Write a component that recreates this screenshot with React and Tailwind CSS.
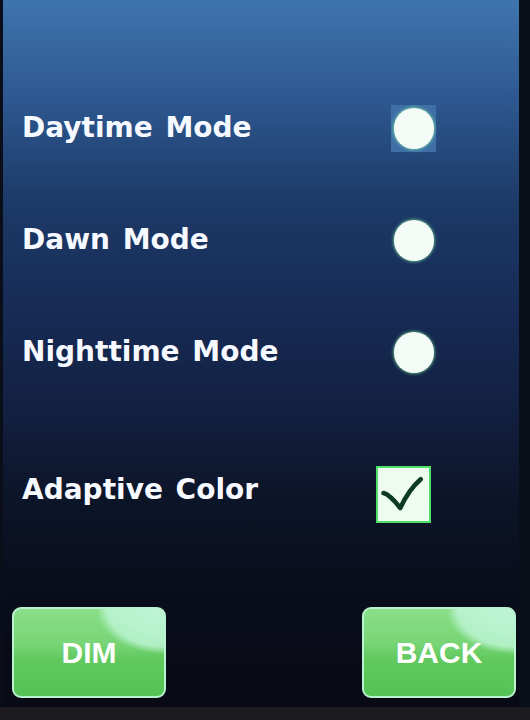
import React from "react"

const rows = [
	{ label: "Daytime Mode", selected: true },
	{ label: "Dawn Mode", selected: false },
	{ label: "Nighttime Mode", selected: false },
]

// Radio dot, the selected one sits on a blue square
function Radio({ selected }) {
	return (
		<div
			className={
				"w-[45px] h-[47px] flex items-center justify-center " +
				(selected ? "bg-[#3f6fa6]" : "")
			}
		>
			<div className="w-[40px] h-[41px] rounded-full bg-[#f4fbf6] shadow-[0_0_3px_1px_rgba(140,255,170,0.55)]" />
		</div>
	)
}

function Checkbox() {
	return (
		<div className="w-[55px] h-[57px] border-2 border-[#4fe06a] bg-[#eefcf0] flex items-center justify-center">
			<svg width="55" height="57" viewBox="0 0 55 57">
				<path
					d="M6 27 C10 28 16 33 24 43 C30 30 38 19 46 12"
					fill="none"
					stroke="#0c3a22"
					strokeWidth="5"
					strokeLinecap="round"
					strokeLinejoin="round"
				/>
			</svg>
		</div>
	)
}

function GreenButton({ children }) {
	return (
		<button className="w-[154px] h-[91px] rounded-[9px] border-2 border-[#b8f2cf] bg-[radial-gradient(ellipse_75px_50px_at_100%_0%,rgba(200,250,228,0.85)_0%,rgba(200,250,228,0.7)_75%,rgba(200,250,228,0)_90%),linear-gradient(to_bottom,#8ade88,#78d576_40%,#60c95e_58%,#55c255)] text-white font-bold text-[30px] font-['Liberation_Sans',Arial,sans-serif] flex items-center justify-center">
			{children}
		</button>
	)
}

export default function App() {
	return (
		<div className="w-[530px] h-[720px] bg-[#0a0e18] flex flex-col overflow-hidden">
			<div className="h-[707px] ml-[3px] mr-[11px] flex flex-col bg-[linear-gradient(to_bottom,#3f74ad_0px,#2d588f_100px,#1d3a68_200px,#172c57_300px,#132143_400px,#0c1428_500px,#090d1a_600px,#080b15_707px)]">
				<div className="h-[72px]" />
				{rows.map((r) => (
					<div key={r.label} className="h-[112px] flex items-center justify-between pl-[19px] pr-[83px]">
						<span className="text-[#f6f9ff] text-[28px] font-bold [word-spacing:3px] font-['DejaVu_Sans',sans-serif]">
							{r.label}
						</span>
						<Radio selected={r.selected} />
					</div>
				))}
				<div className="h-[30px]" />
				<div className="h-[112px] flex items-center justify-between pl-[19px] pr-[88px]">
					<span className="text-[#f6f9ff] text-[28px] font-bold [word-spacing:3px] font-['DejaVu_Sans',sans-serif] -mt-[8px]">
						Adaptive Color
					</span>
					<Checkbox />
				</div>
				<div className="flex justify-between pl-[9px] pr-[3px] mt-[57px]">
					<GreenButton>DIM</GreenButton>
					<GreenButton>BACK</GreenButton>
				</div>
			</div>
			<div className="flex-1 bg-[#1c1c1e]" />
		</div>
	)
}
